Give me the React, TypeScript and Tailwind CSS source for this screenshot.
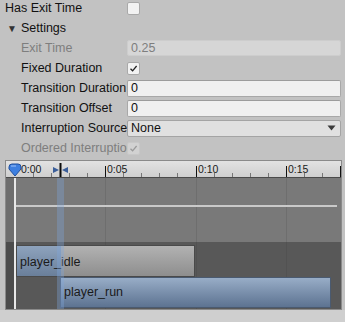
import React from 'react';

const font = { fontFamily: '"Liberation Sans", Arial, sans-serif' };

const Check = ({ on, disabled }: { on?: boolean; disabled?: boolean }) => (
    <div
        className={`w-[13px] h-[13px] rounded-[2px] border flex items-center justify-center ${
            disabled ? 'border-[#c8c8c8] bg-[#d2d2d2]' : 'border-[#a9a9a9] bg-[#f2f2f2]'
        }`}
    >
        {on && (
            <svg width="9" height="9" viewBox="0 0 9 9">
                <path d="M1.5 4.8 L3.6 6.8 L7.6 2" fill="none" stroke={disabled ? '#9a9a9a' : '#222'} strokeWidth="1.3" />
            </svg>
        )}
    </div>
);

const Row = ({ label, disabled, indent = true, children }: { label: string; disabled?: boolean; indent?: boolean; children?: React.ReactNode }) => (
    <div className="flex items-center h-[20px]">
        <div
            className={`${indent ? 'pl-[21px] w-[127px]' : 'pl-[5px] w-[127px]'} shrink-0 overflow-hidden whitespace-nowrap ${
                disabled ? 'text-[#7e7e7e]' : 'text-[#111]'
            }`}
        >
            {label}
        </div>
        <div className="flex-1 pr-[4px] flex items-center">{children}</div>
    </div>
);

const minorTicks = [33, 51, 69, 87, 123, 141, 159, 177, 214, 232, 250, 268, 304, 322];
const majors = [
    { x: 105, t: '0:05' },
    { x: 196, t: '0:10' },
    { x: 286, t: '0:15' },
];

export default function App() {
    return (
        <div className="w-[345px] h-[322px] bg-[#c2c2c2] overflow-hidden text-[12.5px] flex flex-col" style={font}>
            <div className="-mt-[2px]">
                <Row label="Has Exit Time" indent={false}>
                    <Check />
                </Row>
                <div className="flex items-center h-[20px] pl-[7px] text-[#111]">
                    <span className="text-[10px] text-[#333] mr-[4px]">▼</span>
                    Settings
                </div>
                <Row label="Exit Time" disabled>
                    <div className="w-full h-[16px] bg-[#d6d6d6] border border-[#cdcdcd] rounded-[2px] pl-[3px] leading-[14px] text-[#7e7e7e]">0.25</div>
                </Row>
                <Row label="Fixed Duration">
                    <Check on />
                </Row>
                <Row label="Transition Duration">
                    <div className="w-full h-[17px] bg-[#f0f0f0] border border-[#a8a8a8] border-t-[#9c9c9c] rounded-[2px] pl-[3px] leading-[15px] text-[#111]">0</div>
                </Row>
                <Row label="Transition Offset">
                    <div className="w-full h-[17px] bg-[#f0f0f0] border border-[#a8a8a8] border-t-[#9c9c9c] rounded-[2px] pl-[3px] leading-[15px] text-[#111]">0</div>
                </Row>
                <Row label="Interruption Source">
                    <div className="w-full h-[17px] bg-[#e0e0e0] border border-[#a4a4a4] rounded-[2px] pl-[3px] pr-[4px] flex items-center justify-between text-[#111]">
                        <span>None</span>
                        <svg width="9" height="6" viewBox="0 0 9 6">
                            <path d="M0.5 0.5 H8.5 L4.5 5.5 Z" fill="#3a3a3a" />
                        </svg>
                    </div>
                </Row>
                <Row label="Ordered Interruption" disabled>
                    <Check on disabled />
                </Row>
            </div>

            {/* timeline */}
            <div className="relative ml-[5px] mt-[2px] w-[337px] h-[150px] border border-[#8a8a8a] bg-[#6a6a6a] flex flex-col overflow-hidden">
                <div className="relative h-[17px] bg-gradient-to-b from-[#e2e2e2] to-[#cfcfcf] border-b border-[#4a4a4a] text-[10.5px] text-[#1a1a1a]">
                    {minorTicks.map((x) => (
                        <div key={x} className="absolute bottom-0 w-px h-[4px] bg-[#777]" style={{ left: x - 6 }} />
                    ))}
                    {majors.map((m) => (
                        <React.Fragment key={m.x}>
                            <div className="absolute bottom-0 w-px h-[11px] bg-[#111]" style={{ left: m.x - 6 }} />
                            <span className="absolute top-[2px] leading-[12px]" style={{ left: m.x - 4 }}>
                                {m.t}
                            </span>
                        </React.Fragment>
                    ))}
                    <div className="absolute bottom-0 right-0 w-px h-[11px] bg-[#111]" />
                    <span className="absolute top-[2px] left-[15px] leading-[12px]">0:00</span>
                    <svg className="absolute left-[2px] top-[2px]" width="14" height="14" viewBox="0 0 14 14">
                        <path d="M1 4 Q1 1 4 1 H10 Q13 1 13 4 V6 L7 13 L1 6 Z" fill="#3d7fe0" stroke="#1f4f9e" strokeWidth="1" />
                        <path d="M3 3 H8" stroke="#8fb8f5" strokeWidth="1.2" />
                    </svg>
                    <svg className="absolute left-[45px] top-[1px]" width="18" height="15" viewBox="0 0 18 15">
                        <path d="M2 5 L8 8 L2 11 Z" fill="#3a5e9a" />
                        <path d="M17 5 L11 8 L17 11 Z" fill="#3a5e9a" />
                        <path d="M9.5 1 V15" stroke="#0a0a0a" strokeWidth="2" />
                    </svg>
                </div>

                <div className="relative h-[64px] bg-[#797979]">
                    {majors.map((m) => (
                        <div key={m.x} className="absolute top-0 bottom-0 w-px bg-[#6e6e6e]" style={{ left: m.x - 6 }} />
                    ))}
                    <div className="absolute left-[9px] right-[4px] top-[27px] h-[2px] bg-[#c9c9c9]" />
                    <div className="absolute left-0 top-0 bottom-0 w-[8px] bg-[#6e6e6e]" />
                </div>

                <div className="relative flex-1 bg-[#585858] flex flex-col pt-[3px]">
                    <div className="absolute left-0 top-0 bottom-0 w-[8px] bg-[#4c4c4c]" />
                    {majors.map((m) => (
                        <div key={m.x} className="absolute top-0 bottom-0 w-px bg-[#525252]" style={{ left: m.x - 6 }} />
                    ))}
                    <div className="relative ml-[10px] w-[179px] h-[32px] flex border border-[#4a4a4a]">
                        <div className="w-[44px] bg-gradient-to-b from-[#8ea3bd] to-[#6a7f9a]" />
                        <div className="flex-1 bg-gradient-to-b from-[#b2b2b2] to-[#8e8e8e]" />
                        <span className="absolute left-[3px] top-[7px] text-[#1a1a1a]">player_idle</span>
                    </div>
                    <div className="relative ml-[54px] w-[271px] h-[31px] bg-gradient-to-b from-[#98adc7] to-[#5d7391] border border-[#4a5a70] flex items-center pl-[3px] text-[#1a1a1a]">
                        player_run
                    </div>
                </div>

                <div className="absolute left-[8px] top-[17px] bottom-0 w-[2px] bg-[#e8e8e8]" />
                <div className="absolute left-[51px] top-[17px] bottom-0 w-[7px] bg-[#7fa6dc]/35" />
            </div>
            <div className="flex-1 bg-[#cfcfcf]" />
        </div>
    );
}
